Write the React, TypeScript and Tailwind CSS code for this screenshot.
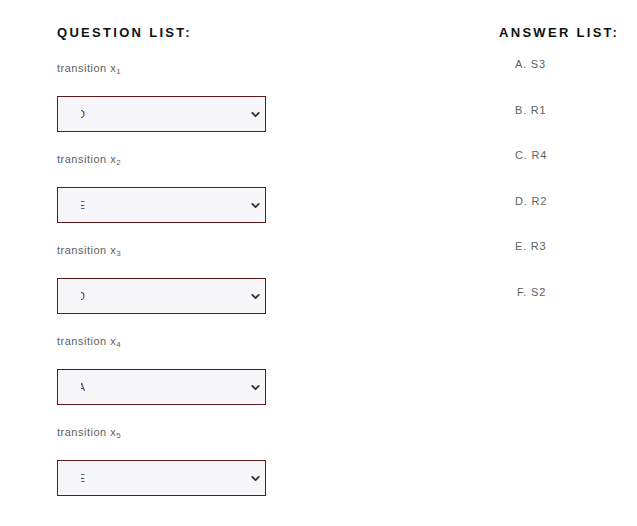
import { ChevronDown } from "lucide-react";

const questions = [
  { sub: "1", letter: "D" },
  { sub: "2", letter: "E" },
  { sub: "3", letter: "D" },
  { sub: "4", letter: "A" },
  { sub: "5", letter: "E" },
];

const answers = ["A. S3", "B. R1", "C. R4", "D. R2", "E. R3", "F. S2"];

function FakeSelect({ letter }: { letter: string }) {
  return (
    <div className="flex h-[36px] w-[209px] items-center border border-[#5e1a1a] bg-[#f7f6f9] pl-[23px] pr-[3px]">
      {/* only the right half of the chosen letter shows */}
      <span className="relative block h-[14px] w-[4px] overflow-hidden">
        <span className="absolute right-0 top-[-1px] text-[11px] leading-[16px] text-[#444]">{letter}</span>
      </span>
      <ChevronDown className="ml-auto h-[13px] w-[13px] text-[#333]" strokeWidth={3.4} />
    </div>
  );
}

export default function App() {
  return (
    <div className="flex min-h-[526px] w-[637px] bg-white font-['Liberation_Sans',Arial,sans-serif]">
      <div className="w-[442px] pl-[57px] pt-[25px]">
        <h2 className="text-[13px] font-bold leading-[15px] tracking-[2.3px] text-[#111]">QUESTION LIST:</h2>
        <div className="mt-[21px] flex flex-col gap-[20px]">
          {questions.map(q => (
            <div key={q.sub}>
              <p className="h-[15px] text-[11px] leading-[15px] tracking-[0.5px] text-[#5f5f5f]">
                transition x<sub className="text-[8px]">{q.sub}</sub>
              </p>
              <div className="mt-[20px]">
                <FakeSelect letter={q.letter} />
              </div>
            </div>
          ))}
        </div>
      </div>
      <div className="pt-[25px]">
        <h2 className="ml-[57px] text-[13px] font-bold leading-[15px] tracking-[2.3px] text-[#111]">ANSWER LIST:</h2>
        <ul className="mt-[17px] ml-[73px] flex flex-col gap-[30.6px]">
          {answers.map((a, i) => (
            <li key={a} className={`h-[15px] text-[11px] leading-[15px] tracking-[0.8px] text-[#5f5f5f] ${i === 5 ? "pl-[2px]" : ""}`}>
              {a}
            </li>
          ))}
        </ul>
      </div>
    </div>
  );
}
